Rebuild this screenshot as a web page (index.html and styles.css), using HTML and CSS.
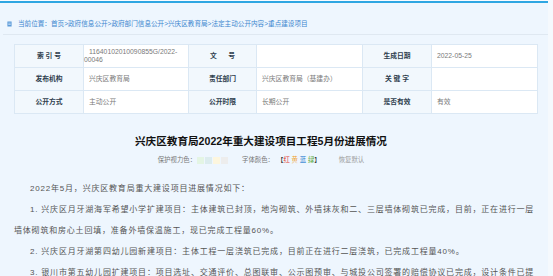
FILE: index.html
```html
<!DOCTYPE html>
<html lang="zh-CN">

<head>
    <meta charset="UTF-8" />
    <title>兴庆区教育局2022年重大建设项目工程5月份进展情况</title>
    <link rel="stylesheet" href="styles.css">
</head>

<body>
    <div class="page">
        <div class="topbar"></div>

        <div class="crumb">
            <svg class="crumb-icon" viewBox="0 0 6 7">
                <rect x="0.5" y="0.5" width="5" height="6" fill="#5b9ad8" />
                <rect x="1.5" y="2" width="3" height="0.8" fill="#dcecfb" />
                <rect x="1.5" y="3.8" width="3" height="0.8" fill="#dcecfb" />
            </svg>
            <span>当前位置：首页&gt;政府信息公开&gt;政府部门信息公开&gt;兴庆区教育局&gt;法定主动公开内容&gt;重点建设项目</span>
        </div>

        <table class="meta-table">
            <colgroup>
                <col class="c-label">
                <col class="c-value">
                <col class="c-label2">
                <col class="c-value2">
                <col class="c-label">
                <col class="c-value2">
            </colgroup>
            <tr>
                <th>索 引 号</th>
                <td>11640102010090855G/2022-00046</td>
                <th>文&nbsp;&nbsp;&nbsp;&nbsp;&nbsp;&nbsp;号</th>
                <td></td>
                <th>生成日期</th>
                <td>2022-05-25</td>
            </tr>
            <tr>
                <th>发布机构</th>
                <td>兴庆区教育局</td>
                <th>责任部门</th>
                <td>兴庆区教育局（基建办）</td>
                <th>关 键 字</th>
                <td></td>
            </tr>
            <tr>
                <th>公开方式</th>
                <td>主动公开</td>
                <th>公开时限</th>
                <td>长期公开</td>
                <th>是否有效</th>
                <td>有效</td>
            </tr>
        </table>

        <div class="article-head">
            <h1>兴庆区教育局2022年重大建设项目工程5月份进展情况</h1>
            <div class="tools">
                <span>保护视力色：</span>
                <span class="swatches">
                    <i class="sw green"></i><i class="sw teal"></i><i class="sw cream"></i><i class="sw grey"></i>
                </span>
                <span class="font-color">字体颜色：</span>
                <span class="bracket">【<b class="red">红</b> <b class="yellow">黄</b> <b class="blue">蓝</b> <b class="green-t">绿</b>】</span>
                <span class="reset">恢复默认</span>
            </div>
        </div>

        <div class="article">
            <p>2022年5月，兴庆区教育局重大建设项目进展情况如下：</p>
            <p>1. 兴庆区月牙湖海军希望小学扩建项目：主体建筑已封顶，地沟砌筑、外墙抹灰和二、三层墙体砌筑已完成，目前，正在进行一层墙体砌筑和房心土回填，准备外墙保温施工，现已完成工程量60%。</p>
            <p>2. 兴庆区月牙湖第四幼儿园新建项目：主体工程一层浇筑已完成，目前正在进行二层浇筑，已完成工程量40%。</p>
            <p>3. 银川市第五幼儿园扩建项目：项目选址、交通评价、总图联审、公示图预审、与城投公司签署的赔偿协议已完成，设计条件已提供。</p>
        </div>
    </div>
</body>

</html>
```

FILE: styles.css
```css
body {
    margin: 0;
    background-color: #f5f9fd;
    font-family: "Liberation Sans", "Noto Sans CJK SC", sans-serif;
    overflow: hidden;
}

.page {
    width: 548px;
    height: 276px;
    background-color: #eef6fe;
}

.topbar {
    height: 2px;
    border-top: 1px solid #f8fbff;
    background-color: #2ea6e2;
}

/* breadcrumb */
.crumb {
    margin: 0 0 0 3px;
    padding: 17px 0 6px 4px;
    border-bottom: 1px solid #dfe8f1;
    font-size: 6.6px;
    line-height: 8px;
    color: #3c86cf;
    display: flex;
    align-items: center;
}

.crumb-icon {
    width: 5px;
    height: 6px;
    margin-right: 6px;
}

/* info table */
.meta-table {
    margin: 9px 0 0 14px;
    width: 523px;
    border-collapse: collapse;
    table-layout: fixed;
    font-size: 6.8px;
}

.c-label {
    width: 69px;
}

.c-value {
    width: 105px;
}

.c-label2 {
    width: 68px;
}

.c-value2 {
    width: 106px;
}

.meta-table th,
.meta-table td {
    height: 22px;
    border: 1px solid #dbe8f4;
    padding: 0;
    line-height: 8px;
}

.meta-table th {
    background-color: #f2f8fd;
    color: #2f3e4e;
    font-weight: bold;
    text-align: center;
}

.meta-table td {
    background-color: #fff;
    color: #7a7a7a;
    text-indent: 5px;
}

/* title */
.article-head {
    margin: 0 40px 0 14px;
    text-align: center;
}

h1 {
    margin: 20px 0 0;
    font-size: 10.6px;
    line-height: 14px;
    color: #111;
}

.tools {
    margin-top: 8px;
    font-size: 6.4px;
    line-height: 8px;
    color: #777;
    display: flex;
    justify-content: center;
    align-items: center;
}

.swatches {
    display: flex;
    gap: 1px;
    margin-left: 1px;
}

.sw {
    width: 7px;
    height: 7px;
    display: block;
}

.sw.green {
    background-color: #e4f5e4;
}

.sw.teal {
    background-color: #dcecee;
}

.sw.cream {
    background-color: #fdf6de;
}

.sw.grey {
    background-color: #ededed;
}

.font-color {
    margin-left: 14px;
}

.bracket {
    margin-left: 3px;
    color: #333;
}

.bracket b {
    font-weight: normal;
}

.red {
    color: #e23a2e;
}

.yellow {
    color: #f0a22e;
}

.blue {
    color: #2f80cf;
}

.green-t {
    color: #5aa83c;
}

.reset {
    margin-left: 18px;
    color: #999;
}

/* body text */
.article {
    margin: 14px 11px 0 14px;
    font-size: 8px;
    letter-spacing: 0.8px;
    line-height: 21px;
    color: #555;
}

.article p {
    margin: 0;
    text-indent: 2em;
}
```
